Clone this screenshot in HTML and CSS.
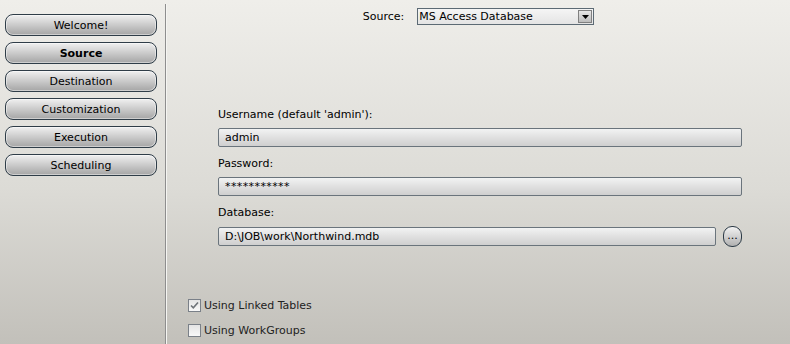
FILE: index.html
```html
<!DOCTYPE html>
<html>
<head>
<meta charset="utf-8">
<link rel="stylesheet" href="styles.css">
</head>
<body>
<div class="app">
  <nav class="sidebar">
    <div class="navbtn">Welcome!</div>
    <div class="navbtn active">Source</div>
    <div class="navbtn">Destination</div>
    <div class="navbtn">Customization</div>
    <div class="navbtn">Execution</div>
    <div class="navbtn">Scheduling</div>
  </nav>
  <div class="divider"></div>
  <main class="main">
    <div class="source-row">
      <span class="source-label">Source:</span>
      <div class="select">
        <span class="select-text">MS Access Database</span>
        <span class="select-arrow"><svg width="7" height="4" viewBox="0 0 7 4"><path d="M0 0h7L3.5 4z" fill="#000"/></svg></span>
      </div>
    </div>
    <div class="form">
      <div class="label">Username (default 'admin'):</div>
      <div class="input">admin</div>
      <div class="label">Password:</div>
      <div class="input pw">***********</div>
      <div class="label">Database:</div>
      <div class="db-row">
        <div class="input db">D:\JOB\work\Northwind.mdb</div>
        <div class="browse">...</div>
      </div>
    </div>
    <div class="checks">
      <div class="check"><span class="box"><svg width="9" height="9" viewBox="0 0 9 9"><path d="M1 4.5l2.3 2.4L8 1.5" fill="none" stroke="#6e7378" stroke-width="1.6"/></svg></span>Using Linked Tables</div>
      <div class="check"><span class="box"></span>Using WorkGroups</div>
    </div>
  </main>
</div>
</body>
</html>
```
FILE: styles.css
```css
html, body {
  margin: 0;
  padding: 0;
}
body {
  width: 790px;
  height: 344px;
  overflow: hidden;
  font-family: Tahoma, "DejaVu Sans", "Liberation Sans", sans-serif;
  font-size: 11px;
  color: #000;
  background: linear-gradient(to bottom, #efeeea 0%, #dcdbd6 55%, #c2c0ba 100%);
}
.app {
  display: flex;
  height: 344px;
}
.sidebar {
  width: 160px;
  padding: 14px 0 0 5px;
  display: flex;
  flex-direction: column;
  gap: 6px;
}
.navbtn {
  box-sizing: border-box;
  width: 152px;
  height: 22px;
  border: 1px solid #2f3d48;
  border-radius: 8px;
  background: linear-gradient(to bottom, #f0f0f0 0%, #d6d6d6 35%, #b4b4b4 80%, #a6a6a6 100%);
  box-shadow: inset 0 0 0 1px rgba(255,255,255,0.45);
  text-align: center;
  line-height: 21px;
  font-size: 11px;
  color: #000;
}
.navbtn.active {
  font-weight: bold;
}
.divider {
  width: 1px;
  margin-top: 4px;
  background: #8e8e8e;
  border-right: 1px solid #f5f5f2;
}
.main {
  flex: 1;
  display: flex;
  flex-direction: column;
}
.source-row {
  display: flex;
  justify-content: center;
  align-items: center;
  gap: 13px;
  margin-top: 8px;
}
.select {
  box-sizing: border-box;
  width: 177px;
  height: 17px;
  border: 1px solid #5c6a74;
  background: linear-gradient(to bottom, #f5f5f5, #e4e4e4);
  display: flex;
  align-items: center;
  justify-content: space-between;
}
.select-text {
  padding-left: 1px;
}
.select-arrow {
  box-sizing: border-box;
  width: 14px;
  height: 13px;
  margin-right: 1px;
  border: 1px solid #808080;
  background: linear-gradient(to bottom, #e6e6e6, #bdbdbd);
  display: flex;
  align-items: center;
  justify-content: center;
}
.form {
  margin-top: 83px;
  padding-left: 51px;
  width: 524px;
}
.label {
  height: 14px;
  line-height: 14px;
  margin-bottom: 6px;
}
.input {
  box-sizing: border-box;
  height: 19px;
  border: 1px solid #6a747c;
  border-radius: 2px;
  background: linear-gradient(to bottom, #f2f3f3 0%, #e0e0e0 50%, #cfcfcf 100%);
  line-height: 17px;
  padding-left: 6px;
  margin-bottom: 10px;
}
.input.pw {
  letter-spacing: 0.4px;
}
.db-row {
  display: flex;
  align-items: center;
  gap: 7px;
}
.input.db {
  width: 499px;
  margin-bottom: 0;
}
.browse {
  box-sizing: border-box;
  width: 19px;
  height: 21px;
  border: 1px solid #2c3a46;
  border-radius: 9px;
  background: linear-gradient(to bottom, #f2f2f2, #b0b0b0);
  text-align: center;
  line-height: 17px;
  font-size: 11px;
}
.checks {
  margin-top: 52px;
  padding-left: 21px;
  display: flex;
  flex-direction: column;
  gap: 12px;
  color: #222;
}
.check {
  display: flex;
  align-items: center;
  height: 13px;
  gap: 3px;
}
.box {
  box-sizing: border-box;
  width: 13px;
  height: 13px;
  border: 1px solid #7a8088;
  background: linear-gradient(to bottom, #e4e4e4, #f8f8f8);
  display: flex;
  align-items: center;
  justify-content: center;
}
```
